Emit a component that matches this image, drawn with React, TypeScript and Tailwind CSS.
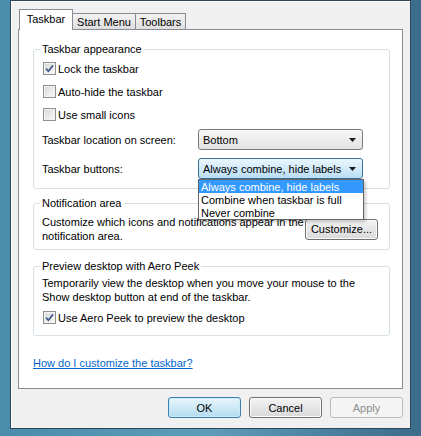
import clsx from "clsx";

const CheckMark = () => (
  <svg width="9" height="9" viewBox="0 0 9 9">
    <path d="M1 4.6 L3.4 7.2 L8 1.4" fill="none" stroke="#44578a" strokeWidth="1.7" />
  </svg>
);

const Arrow = () => (
  <svg width="7" height="4" viewBox="0 0 7 4">
    <path d="M0 0 H7 L3.5 4 Z" fill="#1a1a1a" />
  </svg>
);

function Checkbox({ checked, label }: { checked?: boolean; label: string }) {
  return (
    <label className="flex h-[15px] items-center gap-[2px]">
      <span className="ml-px flex h-[13px] w-[13px] items-center justify-center border border-[#8e8f8f] bg-gradient-to-br from-[#d8d8d8] to-[#fafafa] shadow-[inset_0_0_0_1px_#f3f3f3]">
        {checked && <CheckMark />}
      </span>
      <span>{label}</span>
    </label>
  );
}

const options = ["Always combine, hide labels", "Combine when taskbar is full", "Never combine"];

function Combo({ value, open }: { value: string; open?: boolean }) {
  return (
    <div className="relative w-[165px]">
      <div
        className={clsx(
          "flex h-[21px] items-center justify-between rounded-[3px] border pl-[4px] pr-[6px]",
          open
            ? "border-[#3a6f96] bg-gradient-to-b from-[#eaf6fd] to-[#b9def3]"
            : "border-[#7a7a7a] bg-gradient-to-b from-[#f7f7f7] to-[#e2e2e2]"
        )}
      >
        <span>{value}</span>
        <Arrow />
      </div>
      {open && (
        <ul className="absolute left-0 top-full z-20 w-[166px] border border-[#646464] bg-white shadow-[2px_2px_3px_rgba(0,0,0,0.2)]">
          {options.map((o, i) => (
            <li
              key={o}
              className={clsx(
                "flex h-[13px] items-center pl-[2px]",
                i === 0 && "bg-[#3399ff] text-white"
              )}
            >
              {o}
            </li>
          ))}
        </ul>
      )}
    </div>
  );
}

function Group({ title, className, children }: { title: string; className?: string; children: React.ReactNode }) {
  return (
    <fieldset className={clsx("rounded-[3px] border border-[#d5dfe5] px-[8px]", className)}>
      <legend className="-ml-[2px] px-[2px] leading-[14px]">{title}</legend>
      {children}
    </fieldset>
  );
}

function Button({ label, variant }: { label: string; variant: "default" | "normal" | "disabled" }) {
  return (
    <button
      type="button"
      className={clsx(
        "flex h-[21px] w-[73px] items-center justify-center rounded-[3px] border",
        variant === "default" &&
          "border-[#3c7fb1] bg-gradient-to-b from-[#e8f6fd] to-[#b3dcf0] shadow-[inset_0_0_0_1px_#c9ecfb]",
        variant === "normal" &&
          "border-[#707070] bg-gradient-to-b from-[#f4f4f4] to-[#d9d9d9] shadow-[inset_0_0_0_1px_#fbfbfb]",
        variant === "disabled" && "border-[#b8bcc0] bg-[#f4f4f4] text-[#8d8d8d]"
      )}
    >
      {label}
    </button>
  );
}

export default function App() {
  return (
    <div className="flex h-[436px] w-[421px] bg-gradient-to-r from-[#4a8cab] via-[#5f9cb8] to-[#3b6c8a] px-[10px] pb-[7px] font-['Liberation_Sans',Arial,sans-serif] text-[11px] leading-[14px] text-black">
      <div className="flex flex-1 flex-col border border-[#2c475a] bg-[#f0f0f0] pl-[7px] pr-[7px] pt-[8px] shadow-[inset_1px_1px_0_#fdfdfd]">
        {/* tabs */}
        <div className="flex items-end pl-px">
          <div className="relative z-10 -mb-px flex h-[21px] w-[54px] items-center justify-center border border-b-0 border-[#898c95] bg-white pb-[2px]">
            Taskbar
          </div>
          <div className="-ml-px flex h-[16px] w-[64px] items-center justify-center border border-b-0 border-[#898c95] bg-gradient-to-b from-[#f3f3f3] to-[#dedede]">
            Start Menu
          </div>
          <div className="-ml-px flex h-[16px] w-[51px] items-center justify-center border border-b-0 border-[#898c95] bg-gradient-to-b from-[#f3f3f3] to-[#dedede]">
            Toolbars
          </div>
        </div>

        {/* panel */}
        <div className="flex h-[360px] w-[385px] flex-col border border-[#898c95] bg-white pl-[14px] pr-[12px]">
          <Group title="Taskbar appearance" className="mt-[12px] pb-[9px]">
            <div className="mt-[5px] flex flex-col gap-[8px]">
              <Checkbox checked label="Lock the taskbar" />
              <Checkbox label="Auto-hide the taskbar" />
              <Checkbox label="Use small icons" />
            </div>
            <div className="mt-[7px] flex items-center">
              <span className="w-[156px]">Taskbar location on screen:</span>
              <Combo value="Bottom" />
            </div>
            <div className="relative z-20 mt-[8px] flex items-center">
              <span className="w-[156px]">Taskbar buttons:</span>
              <Combo value="Always combine, hide labels" open />
            </div>
          </Group>

          <Group title="Notification area" className="mt-[7px] pb-[6px]">
            <div className="mt-[5px] flex items-center">
              <p>
                Customize which icons and notifications appear in the
                <br />
                notification area.
              </p>
              <div className="ml-auto mr-[3px]">
                <Button label="Customize..." variant="normal" />
              </div>
            </div>
          </Group>

          <Group title="Preview desktop with Aero Peek" className="mt-[9px] pb-[10px]">
            <p className="mt-[3px]">
              Temporarily view the desktop when you move your mouse to the
              <br />
              Show desktop button at end of the taskbar.
            </p>
            <div className="mt-[6px]">
              <Checkbox checked label="Use Aero Peek to preview the desktop" />
            </div>
          </Group>

          <a href="#" className="mt-[20px] self-start text-[#0066cc] underline">
            How do I customize the taskbar?
          </a>
        </div>

        {/* buttons */}
        <div className="mt-[8px] flex w-[385px] justify-end gap-[8px]">
          <Button label="OK" variant="default" />
          <Button label="Cancel" variant="normal" />
          <Button label="Apply" variant="disabled" />
        </div>
      </div>
    </div>
  );
}
